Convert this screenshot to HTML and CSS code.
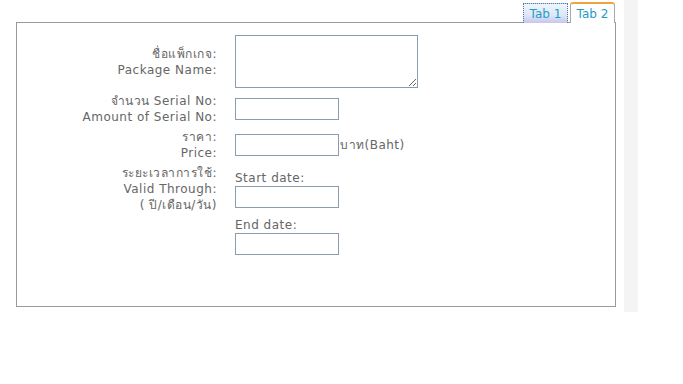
FILE: index.html
```html
<!DOCTYPE html>
<html lang="th">
<head>
    <meta charset="UTF-8">
    <meta name="viewport" content="width=device-width, initial-scale=1.0">
    <title>Package</title>
    <link rel="stylesheet" href="styles.css">
</head>
<body>
    <div class="page">
        <div class="tabs-wrap">
            <div class="tabs">
                <div class="tab tab-focus">Tab 1</div>
                <div class="tab tab-active">Tab 2</div>
            </div>
            <div class="panel">
                <form class="package-form">
                    <label class="lbl lbl-mid" for="pkgName">ชื่อแพ็กเกจ:<br>Package Name:</label>
                    <div class="field"><textarea id="pkgName" class="area"></textarea></div>

                    <label class="lbl lbl-mid" for="serialAmount">จำนวน Serial No:<br>Amount of Serial No:</label>
                    <div class="field"><input type="text" id="serialAmount" class="box"></div>

                    <label class="lbl lbl-mid" for="price">ราคา:<br>Price:</label>
                    <div class="field field-row"><input type="text" id="price" class="box"><span class="unit">บาท(Baht)</span></div>

                    <label class="lbl lbl-top">ระยะเวลาการใช้:<br>Valid Through:<br>( ปี/เดือน/วัน)</label>
                    <div class="field field-dates">
                        <span class="sub">Start date:</span>
                        <input type="text" class="box">
                        <span class="sub sub-gap">End date:</span>
                        <input type="text" class="box">
                    </div>
                </form>
            </div>
        </div>
        <div class="strip"></div>
    </div>
</body>
</html>
```

FILE: styles.css
```css
body {
    margin: 0;
    font-family: "DejaVu Sans", Verdana, "Noto Sans", sans-serif;
    font-size: 12px;
    letter-spacing: 0.5px;
    color: #666;
    background: #fff;
}
.page {
    display: flex;
    align-items: flex-start;
}
.tabs-wrap {
    margin-left: 16px;
    width: 600px;
    padding-top: 2px;
}
.tabs {
    display: flex;
    justify-content: flex-end;
    align-items: flex-end;
    gap: 2px;
    margin-right: 1px;
    margin-bottom: -1px;
}
.tab {
    position: relative;
    z-index: 1;
    box-sizing: border-box;
    width: 45px;
    text-align: center;
    color: #1e9cc8;
    line-height: 16px;
    letter-spacing: 0;
}
.tab-focus {
    height: 20px;
    padding-top: 2px;
    border: 1px dotted #4a7aa8;
    border-bottom: none;
    background: linear-gradient(#eef6fc, #dde6f6 60%, #c8c6ec);
}
.tab-active {
    height: 21px;
    padding-top: 2px;
    border: 1px solid #a8a8a8;
    border-top: 2px solid #f0a43a;
    border-bottom: none;
    border-radius: 3px 3px 0 0;
    background: #fff;
}
.panel {
    box-sizing: border-box;
    height: 285px;
    border: 1px solid #9a9a9a;
    padding-top: 12px;
}
.package-form {
    display: grid;
    grid-template-columns: 200px 1fr;
    column-gap: 18px;
    row-gap: 4px;
    line-height: 16px;
}
.lbl {
    text-align: right;
}
.lbl-mid {
    align-self: center;
}
.lbl-top {
    align-self: start;
}
.field {
    display: flex;
    align-items: center;
}
.field-row {
    align-items: center;
}
.field-dates {
    flex-direction: column;
    align-items: flex-start;
    padding-top: 5px;
}
.area {
    box-sizing: border-box;
    width: 183px;
    height: 53px;
    margin: 0 0 1px;
    border: 1px solid #8a9cb0;
    font: inherit;
}
.box {
    box-sizing: border-box;
    width: 104px;
    height: 22px;
    margin: 0;
    border: 1px solid #8a9cb0;
    font: inherit;
}
.unit {
    margin-left: 1px;
}
.sub-gap {
    margin-top: 9px;
}
.strip {
    width: 14px;
    height: 312px;
    margin-left: 8px;
    background: #f4f4f4;
}
```
